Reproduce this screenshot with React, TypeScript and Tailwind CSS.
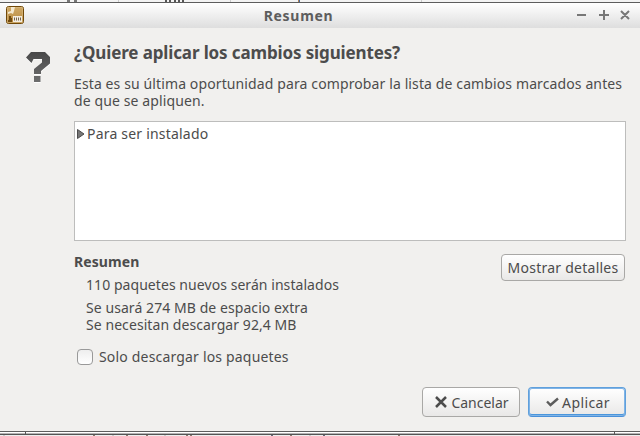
import type { ReactNode } from "react";

function PackageIcon() {
  return (
    <svg width="18" height="18" viewBox="0 0 18 18">
      <defs>
        <linearGradient id="box" x1="0" y1="0" x2="0" y2="1">
          <stop offset="0" stopColor="#d0aa68" />
          <stop offset="1" stopColor="#b8893c" />
        </linearGradient>
      </defs>
      <rect x="0.5" y="0.5" width="17" height="17" rx="2" fill="url(#box)" stroke="#714808" />
      <rect x="1.5" y="1.5" width="15" height="15" fill="none" stroke="#dcc08a" strokeOpacity="0.5" />
      <path d="M5 1h4L8 5 7 8 5 7 2 8V6l3-1z" fill="#f3e8cf" />
      <path d="M3 10h2v2h1v4H2v-2h1z" fill="#6f4a10" />
      <rect x="7" y="10" width="9" height="6" fill="#f3ecdf" />
      <path d="M8.500 11.500v3M10.500 11.500v3M12.500 11.500v3M14.500 11.500v3" stroke="#77654b" />
    </svg>
  );
}

function QuestionIcon() {
  return (
    <svg width="26" height="33" viewBox="0 0 26 33">
      <defs>
        <linearGradient id="mark" x1="0" y1="0" x2="0" y2="1">
          <stop offset="0" stopColor="#484848" />
          <stop offset="1" stopColor="#6e6e6e" />
        </linearGradient>
        <path id="glyph" d="M0 6.500L5 1h14l5 5v6.500L15 20v3H8v-5l8-6.500V8H7.500L5.500 12zM8 25h6.500v6H8z" />
      </defs>
      <use href="#glyph" y="1" fill="#fff" />
      <use href="#glyph" fill="url(#mark)" />
    </svg>
  );
}

function Button({ className, children }: { className: string; children: ReactNode }) {
  return (
    <button className={`flex items-center justify-center rounded-[4px] border bg-linear-to-b whitespace-nowrap ${className}`}>
      {children}
    </button>
  );
}

export default function App() {
  return (
    <div className="flex h-[436px] w-[640px] flex-col overflow-hidden bg-[#f1f0ee] font-['Noto_Sans','Open_Sans',sans-serif] text-[14px] leading-[17px] text-[#4c4c4c]">
      <div className="flex h-[2px] shrink-0 bg-[#f3f3f3]">
        <span className="ml-[67px] h-[2px] w-[3px] bg-[#777]" />
        <span className="ml-[4px] h-[2px] w-[3px] bg-[#777]" />
        <span className="ml-[41px] h-[2px] w-px bg-[#ccc]" />
        <span className="ml-[46px] h-[2px] w-[2px] bg-[#555]" />
        <span className="ml-[2px] h-[2px] w-[2px] bg-[#555]" />
        <span className="ml-[3px] h-[2px] w-[2px] bg-[#555]" />
        <span className="ml-[2px] h-[2px] w-[2px] bg-[#555]" />
        <span className="ml-[2px] h-[2px] w-[2px] bg-[#555]" />
        <span className="ml-[46px] h-[2px] w-px bg-[#ccc]" />
        <span className="ml-[67px] h-[2px] w-px bg-[#b08050]" />
        <span className="h-[2px] w-px bg-[#4468a0]" />
        <span className="ml-[121px] h-[2px] w-px bg-[#ccc]" />
      </div>
      <header className="flex h-[26px] shrink-0 items-center border-t border-[#5d5d5d] bg-linear-to-b from-white to-[#dedede] pr-[10px] pb-px pl-[6px]">
        <PackageIcon />
        <h1 className="flex-1 pr-[3px] text-center text-[14px] font-bold tracking-[0.7px] text-[#5d5d5d]">Resumen</h1>
        <svg width="54" height="12" viewBox="0 0 54 12" fill="none" stroke="#777" strokeWidth="2">
          <path d="M1 6h9M23 6h10M28 1v10M45 2l8 8M53 2l-8 8" />
        </svg>
      </header>
      <main className="flex h-[403px] shrink-0 pt-[13px] pr-[14px] pl-[26px]">
        <div className="w-[48px] shrink-0 pt-[10px]">
          <QuestionIcon />
        </div>
        <div className="flex flex-1 flex-col">
          <h2 className="h-[34px] text-[17px] leading-[24px] font-bold tracking-[-0.13px] whitespace-nowrap">
            ¿Quiere aplicar los cambios siguientes?
          </h2>
          <p className="tracking-[0.115px]">
            Esta es su última oportunidad para comprobar la lista de cambios marcados antes de que se apliquen.
          </p>
          <div className="mt-[12px] h-[120px] shrink-0 border border-[#bdbdbc] bg-white pt-[3px] pl-[2px]">
            <div className="flex items-center">
              <svg width="10" height="10" viewBox="0 0 10 10" className="shrink-0">
                <path d="M0.500 0.500v9L7 5z" fill="#777" stroke="#4c4c4c" />
              </svg>
              <span className="tracking-[0.2px]">Para ser instalado</span>
            </div>
          </div>
          <div className="mt-[12px] flex justify-between">
            <div>
              <h3 className="font-bold tracking-[0.1px]">Resumen</h3>
              <p className="mt-[6px] ml-[12px] tracking-[0.06px]">110 paquetes nuevos serán instalados</p>
              <p className="mt-[6px] ml-[12px] tracking-[0.07px]">
                Se usará 274 MB de espacio extra
                <br />
                Se necesitan descargar 92,4 MB
              </p>
            </div>
            <Button className="mt-[1px] mr-[1px] h-[27px] w-[124px] border-[#a9a8a6] from-white to-[#e9e8e7] tracking-[0.25px]">
              Mostrar detalles
            </Button>
          </div>
          <label className="mt-[15px] flex items-center pl-[3px]">
            <span className="mr-[6px] h-[16px] w-[16px] rounded-[4px] border border-[#999] bg-linear-to-b from-[#eee] to-white" />
            <span className="tracking-[0.18px]">Solo descargar los paquetes</span>
          </label>
          <div className="mt-[22px] flex justify-end gap-[8px]">
            <Button className="h-[30px] w-[98px] border-[#a9a8a6] from-white to-[#e9e8e7] pl-[2px]">
              <svg width="12" height="12" viewBox="0 0 12 12" className="mr-[4px]" stroke="#4c4c4c" strokeWidth="2.500">
                <path d="M1 1l10 10M11 1L1 11" />
              </svg>
              <span>Cancelar</span>
            </Button>
            <Button className="h-[30px] w-[98px] border-[#60a0dc] border-b-[#4a90d9] from-white to-[#e9e8e7] pl-[2px] shadow-[inset_0_0_0_1px_#80b4e6,inset_0_-2px_0_0_#4a96dc]">
              <svg width="13" height="10" viewBox="0 0 13 10" className="mr-[3px]" fill="none" stroke="#5c5c5c" strokeWidth="2.400">
                <path d="M1 4.500L4.500 8 12 1.500" />
              </svg>
              <span className="tracking-[0.4px]">Aplicar</span>
            </Button>
          </div>
        </div>
      </main>
      <footer className="flex h-[5px] shrink-0 flex-col border-t border-[#5d5d5d] bg-[#eee]">
        <div className="flex h-[2px] justify-between bg-linear-to-b from-white from-50% to-[#b4b4b4] to-50% pr-[25px] pl-[25px]">
          <span className="h-[2px] w-px bg-[#555]" />
          <span className="h-[2px] w-px bg-[#555]" />
        </div>
        <div className="h-px bg-[#555]" />
        <div className="flex h-px">
          <span className="ml-[3px] w-[2px] bg-[#ccc]" />
          <span className="ml-[88px] w-[2px] bg-[#87766c]" />
          <span className="ml-[17px] w-[2px] bg-[#ccc]" />
          <span className="ml-[12px] w-[2px] bg-[#87766c]" />
          <span className="ml-[18px] w-[2px] bg-[#87766c]" />
          <span className="ml-[16px] w-[2px] bg-[#ccc]" />
          <span className="ml-[20px] w-[2px] bg-[#87766c]" />
          <span className="ml-[2px] w-[2px] bg-[#87766c]" />
          <span className="ml-[79px] w-[2px] bg-[#667]" />
          <span className="ml-[17px] w-[2px] bg-[#87766c]" />
          <span className="ml-[17px] w-[2px] bg-[#ccc]" />
          <span className="ml-[12px] w-[2px] bg-[#667]" />
          <span className="ml-[73px] w-[2px] bg-[#87766c]" />
        </div>
      </footer>
    </div>
  );
}
